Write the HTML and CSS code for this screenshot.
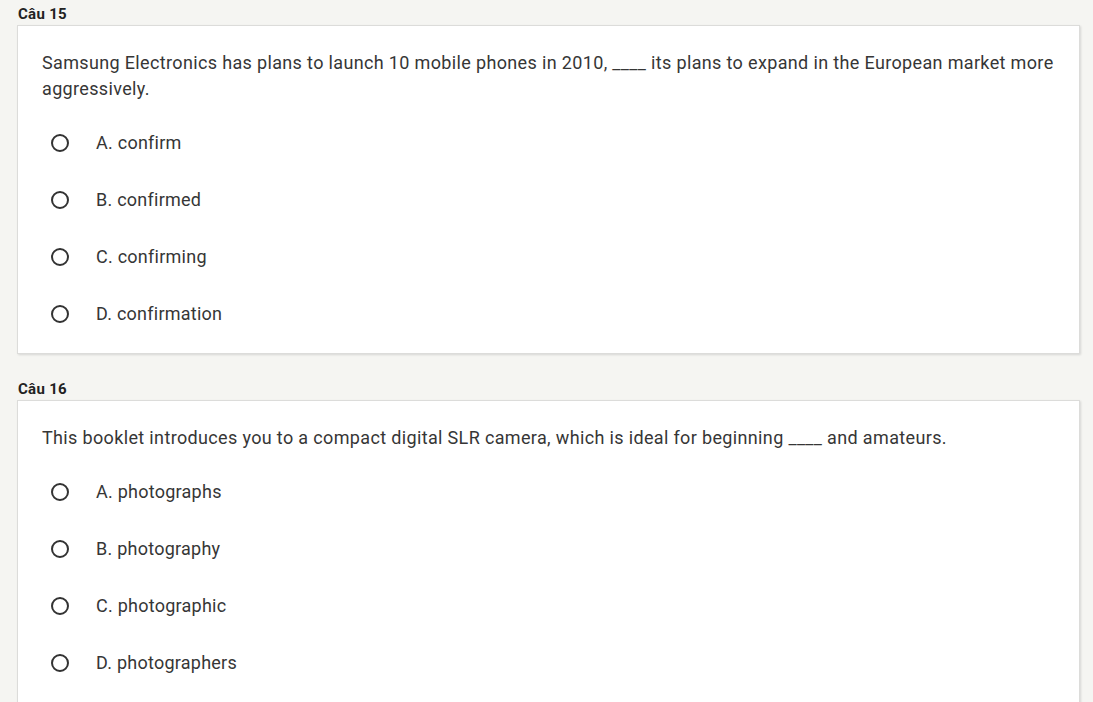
FILE: index.html
```html
<!DOCTYPE html>
<html>
<head>
<meta charset="utf-8">
<link rel="stylesheet" href="styles.css">
</head>
<body>
<div class="page">
  <section class="question">
    <div class="q-title">Câu 15</div>
    <div class="card">
      <p class="q-text">Samsung Electronics has plans to launch 10 mobile phones in 2010, ____ its plans to expand in the European market more aggressively.</p>
      <ul class="options">
        <li class="option"><span class="radio"></span><span class="label">A. confirm</span></li>
        <li class="option"><span class="radio"></span><span class="label">B. confirmed</span></li>
        <li class="option"><span class="radio"></span><span class="label">C. confirming</span></li>
        <li class="option"><span class="radio"></span><span class="label">D. confirmation</span></li>
      </ul>
    </div>
  </section>
  <section class="question">
    <div class="q-title">Câu 16</div>
    <div class="card">
      <p class="q-text">This booklet introduces you to a compact digital SLR camera, which is ideal for beginning ____ and amateurs.</p>
      <ul class="options">
        <li class="option"><span class="radio"></span><span class="label">A. photographs</span></li>
        <li class="option"><span class="radio"></span><span class="label">B. photography</span></li>
        <li class="option"><span class="radio"></span><span class="label">C. photographic</span></li>
        <li class="option"><span class="radio"></span><span class="label">D. photographers</span></li>
      </ul>
    </div>
  </section>
</div>
</body>
</html>
```

FILE: styles.css
```css
html, body {
  margin: 0;
  padding: 0;
  background: #f5f5f2;
  font-family: Roboto, "Liberation Sans", sans-serif;
  color: #333;
}
.page {
  padding-left: 17px;
  width: 1063px;
}
.question {
  margin-bottom: 21px;
}
.q-title {
  height: 25px;
  line-height: 28px;
  font-size: 15px;
  font-weight: 700;
  letter-spacing: 0.3px;
  color: #222;
  padding-left: 1px;
}
.card {
  background: #fff;
  border: 1px solid #dcdcda;
  box-shadow: 1px 1px 2px rgba(0,0,0,0.12);
  padding: 24px 20px 11px 24px;
}
.q-text {
  margin: 0;
  font-size: 18px;
  letter-spacing: 0.35px;
  line-height: 26px;
  color: #363636;
}
.options {
  list-style: none;
  margin: 12px 0 0 0;
  padding: 0;
}
.option {
  display: flex;
  align-items: center;
  height: 57px;
}
.radio {
  box-sizing: border-box;
  width: 18px;
  height: 18px;
  border: 2px solid #333;
  border-radius: 50%;
  margin-left: 9px;
  margin-right: 27px;
}
.label {
  font-size: 18px;
  letter-spacing: 0.25px;
  color: #363636;
}
```
